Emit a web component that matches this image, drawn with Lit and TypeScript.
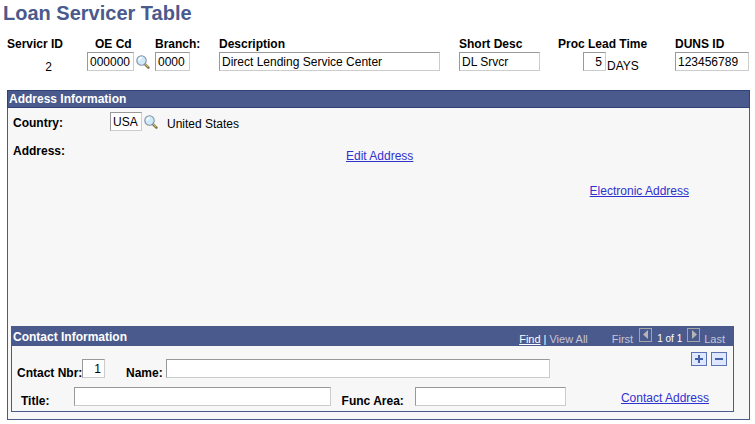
import { LitElement, html, css, svg } from "lit";
import { customElement } from "lit/decorators.js";

const lens = svg`
  <path d="M8.6 8.8 L12.4 12.6" stroke="#6b6236" stroke-width="2.4" stroke-linecap="round"/>
  <path d="M8.8 8.6 L12 11.8" stroke="#d6c27a" stroke-width="1.2" stroke-linecap="round"/>
  <circle cx="5.5" cy="5.5" r="4.7" fill="#cfeaf8" stroke="#8390a8" stroke-width="1.1"/>
  <path d="M3 5.6 A2.8 2.8 0 0 1 5.8 2.8" fill="none" stroke="#fff" stroke-width="1.5"/>`;

@customElement("app-root")
export class AppRoot extends LitElement {
  static styles = css`
    :host {
      display: block;
      background: #fff;
      color: #000;
      font: 12px/14px "Liberation Sans", Arial, sans-serif;
    }
    * { box-sizing: border-box; }
    h1 {
      margin: 0;
      padding: 1px 3px 0;
      font-size: 20px;
      line-height: 24px;
      color: #4a5a8c;
    }
    h2 { margin: 0; font-size: 12px; line-height: 14px; color: #fff; }
    label, .label { font-weight: bold; white-space: nowrap; }
    input {
      height: 19px;
      min-width: 0;
      margin: 0;
      padding: 0 2px;
      border: 1px solid;
      border-color: #999 #ccc #ccc #999;
      border-radius: 0;
      background: #fff;
      color: #000;
      font: inherit;
      outline-offset: -1px;
    }
    .num { text-align: right; padding-right: 3px; }
    a { color: #3131ce; text-decoration: underline; white-space: nowrap; }
    button { padding: 0; margin: 0; background: none; border: 0; display: block; flex: none; }
    svg { display: block; }
    .summary {
      display: grid;
      grid-template-columns: 80px 68px 64px 1fr 99px 117px 75px;
      padding: 12px 5px 0 7px;
    }
    .cell { display: flex; flex-direction: column; }
    .cell > label, .cell > .label { height: 15px; }
    .line { display: flex; align-items: flex-start; }
    .line button { margin: 3px 0 0 2px; }
    .id { width: 45px; text-align: right; padding-top: 8px; }
    .center { padding-left: 8px; }
    .code { width: 47px; }
    .branch { width: 35px; }
    .desc { width: 92%; }
    .short { width: 81px; }
    .lead { width: 23px; margin-left: 25px; }
    .days { padding: 7px 0 0 1px; }
    .duns { width: 74px; }
    .panel { margin: 16px 5px 0 7px; border: 1px solid #4a5a8c; background: #f7f7f7; }
    .bar { background: #4a5a8c; }
    .panel > .bar { margin: -1px -1px 0; padding: 1px; border: 1px solid #2f4278; height: 18px; }
    .address { padding: 4px 60px 0 5px; min-height: 218px; }
    .country { display: grid; grid-template-columns: 97px 32px 25px 1fr; align-items: center; }
    .country button { margin-left: 2px; }
    .country span { padding-top: 4px; }
    .country label { padding-top: 2px; }
    .edit { display: grid; grid-template-columns: 333px 1fr; padding-top: 13px; }
    .edit a { padding-top: 5px; }
    .electronic { text-align: right; padding-top: 21px; }
    .contact { margin: 0 15px 7px 3px; border: 1px solid #4a5a8c; }
    .contact .bar { display: flex; justify-content: space-between; height: 19px; padding: 3px 8px 0 1px; }
    .nav { display: flex; color: #c6c6d6; font-size: 11px; padding-top: 2px; }
    .nav a, .nav .now { color: #fff; }
    .nav .sep { color: #fff; padding: 0 3px; }
    .nav .first { padding: 0 6px 0 24px; }
    .nav .now { padding: 0 5px; font-size: 10px; }
    .nav .last { padding-left: 4px; }
    .nav button { margin-top: -4px; height: 14px; }
    .row { display: flex; align-items: flex-end; }
    .row label { flex: none; line-height: 10px; }
    .one { padding: 6px 6px 0 5px; }
    .nbr { width: 65px; }
    .nbrbox { width: 23px; flex: none; }
    .namelabel { width: 40px; margin-left: 21px; }
    .name { flex: 1; margin: 7px 141px 0 0; }
    .tools { display: flex; gap: 4px; align-self: flex-start; }
    .two { padding: 9px 24px 5px 9px; }
    .titlelabel { width: 53px; }
    .title { flex: 250; }
    .func { width: 73px; margin-left: 11px; }
    .area { flex: 145; margin-right: 55px; }
    .two a { padding-bottom: 1px; }
  `;

  private search(name: string) {
    return html`<button type="button" aria-label=${name}>
      <svg width="14" height="14" viewBox="0 0 14 14">${lens}</svg>
    </button>`;
  }

  private arrow(name: string, d: string) {
    return html`<button type="button" aria-label=${name} disabled>
      <svg width="13" height="14" viewBox="0 0 13 14">
        <rect x=".5" y=".5" width="12" height="13" fill="none" stroke="#a5a5a5"/>
        <path d=${d} fill="#b5b5b5"/>
      </svg>
    </button>`;
  }

  private tool(name: string, d: string) {
    return html`<button type="button" aria-label=${name}>
      <svg width="16" height="14" viewBox="0 0 16 14">
        <rect x=".5" y=".5" width="15" height="13" fill="#dee7ff" stroke="#5a73b5"/>
        <path d=${d} stroke="#4260a8" stroke-width="2"/>
      </svg>
    </button>`;
  }

  render() {
    return html`
      <h1>Loan Servicer Table</h1>
      <section class="summary">
        <div class="cell"><span class="label">Servicr ID</span><span class="id">2</span></div>
        <div class="cell">
          <label class="center" for="oe">OE Cd</label>
          <div class="line"><input id="oe" class="code" value="000000">${this.search("Look up OE Cd")}</div>
        </div>
        <div class="cell"><label for="branch">Branch:</label><input id="branch" class="branch" value="0000"></div>
        <div class="cell"><label for="desc">Description</label><input id="desc" class="desc" value="Direct Lending Service Center"></div>
        <div class="cell"><label for="short">Short Desc</label><input id="short" class="short" value="DL Srvcr"></div>
        <div class="cell">
          <label for="lead">Proc Lead Time</label>
          <div class="line"><input id="lead" class="lead num" value="5"><span class="days">DAYS</span></div>
        </div>
        <div class="cell"><label for="duns">DUNS ID</label><input id="duns" class="duns" value="123456789"></div>
      </section>
      <section class="panel">
        <div class="bar"><h2>Address Information</h2></div>
        <div class="address">
          <div class="country">
            <label for="country">Country:</label>
            <input id="country" value="USA">
            ${this.search("Look up Country")}
            <span>United States</span>
          </div>
          <div class="edit"><span class="label">Address:</span><div class="line"><a href="#edit">Edit Address</a></div></div>
          <div class="electronic"><a href="#electronic">Electronic Address</a></div>
        </div>
        <section class="contact">
          <div class="bar">
            <h2>Contact Information</h2>
            <div class="nav">
              <a href="#find">Find</a><span class="sep">|</span><span>View All</span>
              <span class="first">First</span>${this.arrow("Previous", "M9 2 V11 L4 6.5Z")}
              <span class="now">1 of 1</span>${this.arrow("Next", "M5 2 V11 L10 6.5Z")}
              <span class="last">Last</span>
            </div>
          </div>
          <div class="row one">
            <label class="nbr" for="nbr">Cntact Nbr:</label><input id="nbr" class="nbrbox num" value="1">
            <label class="namelabel" for="name">Name:</label><input id="name" class="name">
            <div class="tools">${this.tool("Add row", "M4 7 H12 M8 3 V11")}${this.tool("Delete row", "M4 7 H12")}</div>
          </div>
          <div class="row two">
            <label class="titlelabel" for="title">Title:</label><input id="title" class="title">
            <label class="func" for="func">Func Area:</label><input id="func" class="area">
            <a href="#contact">Contact Address</a>
          </div>
        </section>
      </section>
    `;
  }
}
